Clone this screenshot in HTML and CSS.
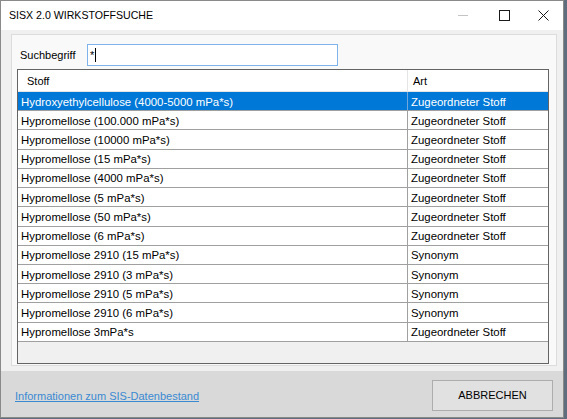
FILE: index.html
```html
<!DOCTYPE html>
<html lang="de">
<head>
<meta charset="utf-8">
<title>SISX 2.0 Wirkstoffsuche</title>
<link rel="stylesheet" href="styles.css">
</head>
<body>
<div class="window">
  <div class="titlebar">
    <span class="title">SISX 2.0 WIRKSTOFFSUCHE</span>
    <div class="controls">
      <span class="ctl min"><svg width="11" height="11" viewBox="0 0 11 11"><path d="M0 5.5H10" stroke="#c4c4c4" stroke-width="1"/></svg></span>
      <span class="ctl max"><svg width="11" height="11" viewBox="0 0 11 11"><rect x="0.5" y="0.5" width="10" height="10" fill="none" stroke="#1a1a1a" stroke-width="1"/></svg></span>
      <span class="ctl close"><svg width="11" height="11" viewBox="0 0 11 11"><path d="M0.5 0.5L10.5 10.5M10.5 0.5L0.5 10.5" stroke="#1a1a1a" stroke-width="1"/></svg></span>
    </div>
  </div>
  <div class="main">
    <div class="panel">
      <div class="search">
        <label class="label">Suchbegriff</label>
        <div class="input">*<span class="caret"></span></div>
      </div>
      <div class="table">
        <div class="row head"><div class="c1">Stoff</div><div class="c2">Art</div></div>
        <div class="row sel"><div class="c1">Hydroxyethylcellulose (4000-5000 mPa*s)</div><div class="c2">Zugeordneter Stoff</div></div>
        <div class="row"><div class="c1">Hypromellose (100.000 mPa*s)</div><div class="c2">Zugeordneter Stoff</div></div>
        <div class="row"><div class="c1">Hypromellose (10000 mPa*s)</div><div class="c2">Zugeordneter Stoff</div></div>
        <div class="row"><div class="c1">Hypromellose (15 mPa*s)</div><div class="c2">Zugeordneter Stoff</div></div>
        <div class="row"><div class="c1">Hypromellose (4000 mPa*s)</div><div class="c2">Zugeordneter Stoff</div></div>
        <div class="row"><div class="c1">Hypromellose (5 mPa*s)</div><div class="c2">Zugeordneter Stoff</div></div>
        <div class="row"><div class="c1">Hypromellose (50 mPa*s)</div><div class="c2">Zugeordneter Stoff</div></div>
        <div class="row"><div class="c1">Hypromellose (6 mPa*s)</div><div class="c2">Zugeordneter Stoff</div></div>
        <div class="row"><div class="c1">Hypromellose 2910 (15 mPa*s)</div><div class="c2">Synonym</div></div>
        <div class="row"><div class="c1">Hypromellose 2910 (3 mPa*s)</div><div class="c2">Synonym</div></div>
        <div class="row"><div class="c1">Hypromellose 2910 (5 mPa*s)</div><div class="c2">Synonym</div></div>
        <div class="row"><div class="c1">Hypromellose 2910 (6 mPa*s)</div><div class="c2">Synonym</div></div>
        <div class="row"><div class="c1">Hypromellose 3mPa*s</div><div class="c2">Zugeordneter Stoff</div></div>
      </div>
    </div>
  </div>
  <div class="footer">
    <a class="link" href="#">Informationen zum SIS-Datenbestand</a>
    <button class="btn">ABBRECHEN</button>
  </div>
</div>
</body>
</html>
```
FILE: styles.css
```css
* { box-sizing: border-box; }
html, body { margin: 0; padding: 0; }
body {
  width: 567px;
  height: 419px;
  background: #5f6d7c;
  font-family: "Liberation Sans", Arial, sans-serif;
  font-size: 11px;
  color: #000;
  overflow: hidden;
}
.window {
  width: 564px;
  height: 418px;
  border: 1px solid #8a8a8a;
  background: #f0f0f0;
  display: flex;
  flex-direction: column;
}
.titlebar {
  height: 29px;
  flex: none;
  background: #fff;
  display: flex;
  align-items: center;
  padding-left: 8px;
}
.title {
  font-size: 10.6px;
  color: #000;
  flex: 1;
  margin-top: -1px;
}
.controls {
  display: flex;
  height: 29px;
  align-items: center;
}
.ctl {
  width: 40px;
  display: flex;
  justify-content: center;
  align-items: center;
  height: 29px;
}
.ctl svg { display: block; }
.ctl.min { margin-right: 1px; }
.ctl.close { width: 39px; }
.main {
  flex: none;
  height: 341px;
  padding: 4px 6px 5px 10px;
  background: #f0f0f0;
}
.panel {
  height: 100%;
  border: 1px solid #dcdcdc;
  background: #f9f9f9;
  padding: 9px 7px 1px 5px;
  display: flex;
  flex-direction: column;
}
.search {
  display: flex;
  align-items: center;
  height: 22px;
  margin-bottom: 3px;
  flex: none;
}
.label {
  margin-left: 3px;
  width: 67px;
}
.input {
  width: 251px;
  height: 22px;
  border: 1px solid #7eb4ea;
  background: #fff;
  padding: 4px 0 0 2px;
  display: flex;
  align-items: flex-start;
  line-height: 12px;
}
.caret {
  display: inline-block;
  width: 1px;
  height: 14px;
  background: #000;
  margin-left: 1px;
  margin-top: -1px;
}
.table {
  flex: 1;
  border: 1px solid #646464;
  background: #f0f0f0;
  display: flex;
  flex-direction: column;
  font-size: 11.4px;
}
.row {
  display: flex;
  height: 19.23px;
  flex: none;
  background: #fff;
  border-bottom: 1px solid #a0a0a0;
  align-items: center;
}
.row.head {
  height: 22px;
  border-bottom: 1px solid #e5e5e5;
  font-size: 11px;
}
.c1 {
  width: 390px;
  height: 100%;
  display: flex;
  align-items: center;
  padding-left: 3px;
  padding-top: 1px;
  border-right: 1px solid #a0a0a0;
  white-space: nowrap;
}
.c2 {
  flex: 1;
  height: 100%;
  display: flex;
  align-items: center;
  padding-left: 3px;
  padding-top: 1px;
  white-space: nowrap;
}
.head .c1 { padding-left: 9px; border-right-color: #e5e5e5; }
.head .c2 { padding-left: 5px; }
.row.sel {
  background: #0078d7;
  color: #fff;
}
.sel .c1 { border-right-color: #70a8dc; }
.footer {
  flex: 1;
  background: #d9d9d9;
  display: flex;
  align-items: center;
  justify-content: space-between;
  padding: 0 10px 0 14px;
}
.link {
  color: #3a8ad3;
  text-decoration: underline;
  font-size: 11px;
  margin-top: 3px;
}
.btn {
  width: 121px;
  height: 31px;
  border: 1px solid #adadad;
  background: #e1e1e1;
  font-family: "Liberation Sans", Arial, sans-serif;
  font-size: 11px;
  color: #000;
  padding: 0;
  margin-top: 2px;
}
```
